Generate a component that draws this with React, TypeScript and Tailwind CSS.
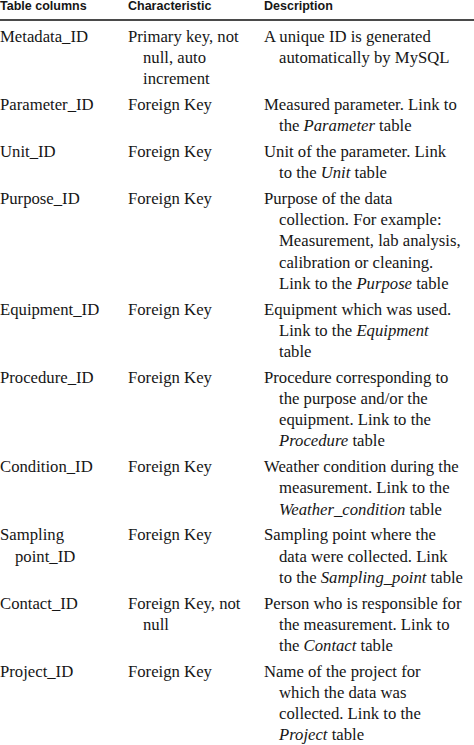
import React from "react";

type Row = { name: string[]; kind: string[]; desc: string[] };

// lines are written out so the wrapping matches the printed table; *word* = italic
const rows: Row[] = [
  { name: ["Metadata_ID"], kind: ["Primary key, not", "null, auto", "increment"], desc: ["A unique ID is generated", "automatically by MySQL"] },
  { name: ["Parameter_ID"], kind: ["Foreign Key"], desc: ["Measured parameter. Link to", "the *Parameter* table"] },
  { name: ["Unit_ID"], kind: ["Foreign Key"], desc: ["Unit of the parameter. Link", "to the *Unit* table"] },
  {
    name: ["Purpose_ID"],
    kind: ["Foreign Key"],
    desc: ["Purpose of the data", "collection. For example:", "Measurement, lab analysis,", "calibration or cleaning.", "Link to the *Purpose* table"],
  },
  { name: ["Equipment_ID"], kind: ["Foreign Key"], desc: ["Equipment which was used.", "Link to the *Equipment*", "table"] },
  {
    name: ["Procedure_ID"],
    kind: ["Foreign Key"],
    desc: ["Procedure corresponding to", "the purpose and/or the", "equipment. Link to the", "*Procedure* table"],
  },
  { name: ["Condition_ID"], kind: ["Foreign Key"], desc: ["Weather condition during the", "measurement. Link to the", "*Weather_condition* table"] },
  { name: ["Sampling", "point_ID"], kind: ["Foreign Key"], desc: ["Sampling point where the", "data were collected. Link", "to the *Sampling_point* table"] },
  { name: ["Contact_ID"], kind: ["Foreign Key, not", "null"], desc: ["Person who is responsible for", "the measurement. Link to", "the *Contact* table"] },
  { name: ["Project_ID"], kind: ["Foreign Key"], desc: ["Name of the project for", "which the data was", "collected. Link to the", "*Project* table"] },
];

function Line({ text }: { text: string }) {
  const parts = text.split("*");
  return (
    <>
      {parts.map((p, i) => (i % 2 === 1 ? <i key={i}>{p}</i> : <span key={i}>{p}</span>))}
    </>
  );
}

function Cell({ lines }: { lines: string[] }) {
  return (
    <div className="whitespace-nowrap">
      {lines.map((l, i) => (
        <div key={i} className={i === 0 ? "" : "pl-[15px]"}>
          <Line text={l} />
        </div>
      ))}
    </div>
  );
}

export default function App() {
  return (
    <div className="w-[474px] h-[745px] overflow-hidden bg-white text-[#161616]">
      {/* header */}
      <div className="grid grid-cols-[128px_136px_1fr] h-[21px] border-b-2 border-[#4a4a4a] [font-family:'Liberation_Sans',Arial,sans-serif] font-bold text-[12.5px] leading-[12px]">
        <div>Table columns</div>
        <div>Characteristic</div>
        <div>Description</div>
      </div>

      {/* body */}
      <div className="pt-[2.5px] [font-family:'Liberation_Serif','Times_New_Roman',serif] text-[16.7px] leading-[21.2px]">
        {rows.map((r) => (
          <div key={r.name.join(" ")} className="grid grid-cols-[128px_136px_1fr] py-[2.3px]">
            <Cell lines={r.name} />
            <Cell lines={r.kind} />
            <Cell lines={r.desc} />
          </div>
        ))}
      </div>
    </div>
  );
}
